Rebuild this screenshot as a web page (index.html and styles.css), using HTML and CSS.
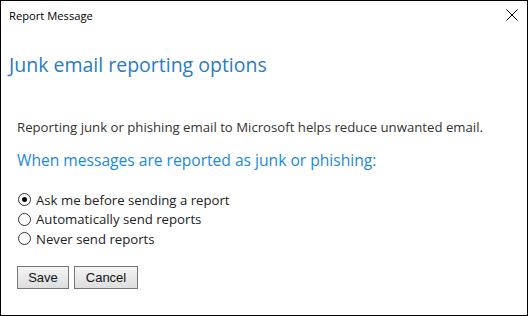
FILE: index.html
```html
<!DOCTYPE html>
<html>
<head>
<meta charset="utf-8">
<link rel="stylesheet" href="styles.css">
</head>
<body>
<div class="window">
  <div class="titlebar">
    <span class="title">Report Message</span>
    <svg class="close" width="12" height="12" viewBox="0 0 12 12"><path d="M0.5 0.5 L11.5 11.5 M11.5 0.5 L0.5 11.5" stroke="#000" stroke-width="1" fill="none"/></svg>
  </div>
  <h1 class="heading">Junk email reporting options</h1>
  <div class="content">
    <p class="intro">Reporting junk or phishing email to Microsoft helps reduce unwanted email.</p>
    <h2 class="subheading">When messages are reported as junk or phishing:</h2>
    <div class="options">
      <label class="option"><span class="radio checked"></span>Ask me before sending a report</label>
      <label class="option"><span class="radio"></span>Automatically send reports</label>
      <label class="option"><span class="radio"></span>Never send reports</label>
    </div>
    <div class="buttons">
      <button class="btn save">Save</button>
      <button class="btn cancel">Cancel</button>
    </div>
  </div>
</div>
</body>
</html>
```
FILE: styles.css
```css
html, body { margin: 0; padding: 0; background: #fff; }
body { font-family: "Open Sans", "Noto Sans", sans-serif; }
.window {
  width: 528px; height: 316px; box-sizing: border-box;
  border: 1px solid #000; background: #fff; position: relative;
}
.titlebar {
  display: flex; align-items: center; justify-content: space-between;
  height: 28px; padding: 0 8px 0 8px;
}
.title { font-size: 11.2px; color: #000; }
.close { margin-right: 1px; }
.heading {
  margin: 23px 0 0 8px; font-weight: 400; font-size: 19.5px; color: #2b7bc3;
  line-height: 26px;
}
.content { padding: 0 0 0 16px; }
.intro { margin: 40px 0 0 0; font-size: 13.2px; color: #333; line-height: 18px; }
.subheading { margin: 12px 0 0 0; font-weight: 400; font-size: 15.6px; color: #1b89dc; line-height: 24px; }
.options { margin-top: 18px; display: flex; flex-direction: column; }
.option { display: flex; align-items: center; height: 19.5px; font-size: 13.2px; color: #222; }
.radio {
  width: 11px; height: 11px; border: 1px solid #333; border-radius: 50%;
  margin: 0 5px 0 1px; box-sizing: content-box; position: relative; flex: none;
}
.radio.checked::after {
  content: ""; position: absolute; left: 3px; top: 3px; width: 5px; height: 5px;
  border-radius: 50%; background: #000;
}
.buttons { display: flex; gap: 5px; margin-top: 17px; }
.btn {
  font-family: "Liberation Sans", Arial, sans-serif; font-size: 13px; color: #111;
  height: 23px; padding: 0 10px; border: 1px solid #777; border-radius: 0;
  background: linear-gradient(#f4f4f4, #dedede);
}
.btn.save { width: 52px; }
.btn.cancel { width: 64px; }
```
